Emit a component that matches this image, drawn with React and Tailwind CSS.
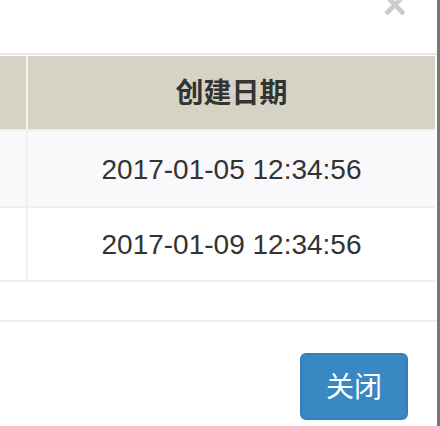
export default function App() {
  const font = { fontFamily: '"Liberation Sans", "Noto Sans CJK SC", sans-serif' };
  const rows = ["2017-01-05 12:34:56", "2017-01-09 12:34:56"];

  return (
    <div className="flex h-[426px] w-[440px] overflow-hidden bg-[#777]" style={font}>
      <div className="flex w-[437px] flex-col bg-white text-[#333]">
        {/* header */}
        <div className="flex h-[55px] shrink-0 items-start justify-end border-b-2 border-[#ebe5e5] pr-[30px]">
          <span className="-mt-[16px] text-[42px] font-bold leading-none text-black opacity-20">×</span>
        </div>

        {/* table */}
        <div className="w-[435px] pt-[1px]">
          <div className="flex h-[73px] bg-[#d6d3c6]">
            <div className="w-[26px]" />
            <div className="w-[2px] bg-[#f4f2ea]" />
            <div className="flex flex-1 items-center justify-center pt-[2px] text-[28px] font-bold">创建日期</div>
          </div>
          {rows.map((r, i) => (
            <div
              key={r}
              className={`flex border-t-2 border-[#eeeeee] ${i === 0 ? "h-[77px] bg-[#f9f9fb]" : "h-[74px] bg-white"}`}
            >
              <div className="w-[26px]" />
              <div className="w-[2px] bg-[#f0f0f0]" />
              <div className="flex flex-1 items-center justify-center pt-[2px] text-[28px]">{r}</div>
            </div>
          ))}
          <div className="h-[2px] bg-[#eeeeee]" />
        </div>

        {/* footer */}
        <div className="mt-[38px] flex justify-end border-t-2 border-[#eeeeee] pr-[29px] pt-[31px]">
          <button className="h-[67px] w-[108px] rounded-[6px] border-2 border-[#357ebd] bg-[#3a88c3] pt-[2px] text-[28px] text-white">
            关闭
          </button>
        </div>
      </div>
    </div>
  );
}
